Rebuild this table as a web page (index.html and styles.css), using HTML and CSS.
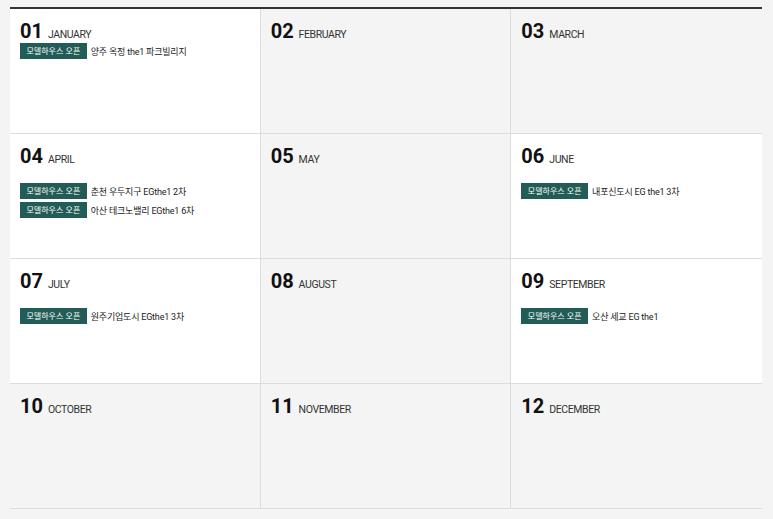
FILE: index.html
```html
<!DOCTYPE html>
<html lang="ko">
<head>
<meta charset="utf-8">
<title>분양 일정</title>
<link rel="stylesheet" href="styles.css">
</head>
<body>
<div class="calendar">
  <div class="cell has-events">
    <div class="title"><span class="num">01</span><span class="month">JANUARY</span></div>
    <ul class="events tight">
      <li><span class="badge">모델하우스 오픈</span><span class="name">양주 옥정 the1 파크빌리지</span></li>
    </ul>
  </div>
  <div class="cell">
    <div class="title"><span class="num">02</span><span class="month">FEBRUARY</span></div>
  </div>
  <div class="cell last">
    <div class="title"><span class="num">03</span><span class="month">MARCH</span></div>
  </div>

  <div class="cell has-events">
    <div class="title"><span class="num">04</span><span class="month">APRIL</span></div>
    <ul class="events">
      <li><span class="badge">모델하우스 오픈</span><span class="name">춘천 우두지구 EGthe1 2차</span></li>
      <li><span class="badge">모델하우스 오픈</span><span class="name">아산 테크노밸리 EGthe1 6차</span></li>
    </ul>
  </div>
  <div class="cell">
    <div class="title"><span class="num">05</span><span class="month">MAY</span></div>
  </div>
  <div class="cell last has-events">
    <div class="title"><span class="num">06</span><span class="month">JUNE</span></div>
    <ul class="events">
      <li><span class="badge">모델하우스 오픈</span><span class="name">내포신도시 EG the1 3차</span></li>
    </ul>
  </div>

  <div class="cell has-events">
    <div class="title"><span class="num">07</span><span class="month">JULY</span></div>
    <ul class="events">
      <li><span class="badge">모델하우스 오픈</span><span class="name">원주기업도시 EGthe1 3차</span></li>
    </ul>
  </div>
  <div class="cell">
    <div class="title"><span class="num">08</span><span class="month">AUGUST</span></div>
  </div>
  <div class="cell last has-events">
    <div class="title"><span class="num">09</span><span class="month">SEPTEMBER</span></div>
    <ul class="events">
      <li><span class="badge">모델하우스 오픈</span><span class="name">오산 세교 EG the1</span></li>
    </ul>
  </div>

  <div class="cell">
    <div class="title"><span class="num">10</span><span class="month">OCTOBER</span></div>
  </div>
  <div class="cell">
    <div class="title"><span class="num">11</span><span class="month">NOVEMBER</span></div>
  </div>
  <div class="cell last">
    <div class="title"><span class="num">12</span><span class="month">DECEMBER</span></div>
  </div>
</div>
</body>
</html>
```
FILE: styles.css
```css
html, body {
  margin: 0;
  padding: 0;
  background: #f4f4f4;
}
body {
  font-family: Roboto, "Noto Sans CJK KR", sans-serif;
  color: #222;
}
.calendar {
  margin: 7px 0 0 10px;
  width: 752px;
  border-top: 2px solid #333;
  display: grid;
  grid-template-columns: repeat(3, 1fr);
  grid-auto-rows: 125px;
}
.cell {
  box-sizing: border-box;
  padding: 10px 10px 0;
  border-right: 1px solid #dcdcdc;
  border-bottom: 1px solid #dcdcdc;
  background: #f4f4f4;
}
.cell.last {
  border-right: none;
}
.cell.has-events {
  background: #fff;
}
.title {
  display: flex;
  align-items: baseline;
  gap: 5px;
  line-height: 24px;
}
.num {
  font-size: 20px;
  font-weight: 700;
  color: #111;
}
.month {
  font-size: 10.5px;
  color: #333;
  letter-spacing: -0.4px;
}
.events {
  list-style: none;
  margin: 11px 0 0;
  padding: 0;
  display: flex;
  flex-direction: column;
  gap: 3px;
}
.events.tight {
  margin-top: -4px;
}
.events li {
  display: flex;
  align-items: center;
  height: 16px;
}
.badge {
  background: #215d56;
  color: #fff;
  font-family: "Noto Sans CJK KR", sans-serif;
  font-size: 8px;
  line-height: 16px;
  padding: 0 6.5px;
}
.name {
  margin-left: 4px;
  font-family: Roboto, "Noto Sans CJK KR", sans-serif;
  font-size: 9px;
  color: #222;
  letter-spacing: -0.2px;
}
```
